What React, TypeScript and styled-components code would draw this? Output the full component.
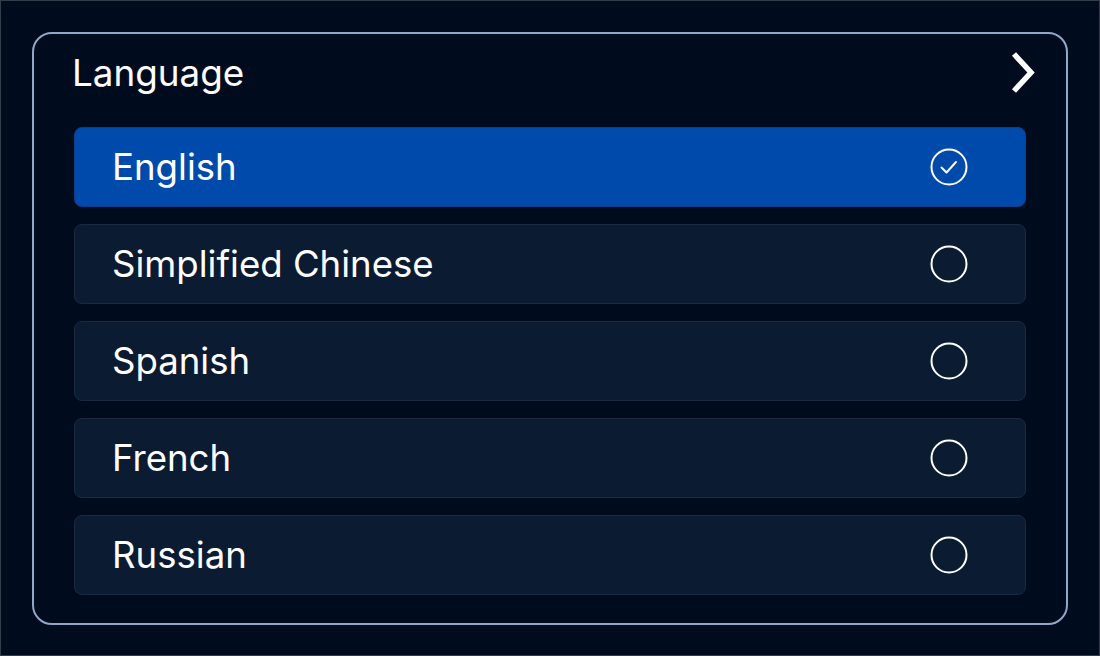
import React, { useState } from "react";
import styled, { createGlobalStyle } from "styled-components";

const GlobalStyle = createGlobalStyle`
    html, body {
        margin: 0;
        padding: 0;
        background: #000c1e;
    }
    * {
        box-sizing: border-box;
    }
`;

const Page = styled.div`
    width: 1100px;
    height: 656px;
    border: 1px solid #333c48;
    background: #000c1e;
    padding: 31px;
    font-family: Inter, "Noto Sans", sans-serif;
    color: #ffffff;
`;

const Card = styled.section`
    height: 593px;
    border: 2px solid #91a7c7;
    border-radius: 20px;
    padding: 0 40px;
    display: flex;
    flex-direction: column;
`;

const Header = styled.div`
    display: flex;
    align-items: center;
    justify-content: space-between;
    height: 77px;
    margin-right: -11px;
    margin-bottom: 16px;
`;

const Title = styled.h2`
    margin: 0 0 0 -2px;
    font-size: 36.8px;
    font-weight: 400;
`;

const ChevronButton = styled.button`
    background: none;
    border: none;
    padding: 0;
    width: 28px;
    height: 42px;
    display: flex;
    align-items: center;
    justify-content: center;
    cursor: pointer;
`;

const List = styled.div`
    display: flex;
    flex-direction: column;
    gap: 17px;
`;

const Row = styled.button<{ $selected: boolean }>`
    height: 80px;
    width: 100%;
    display: flex;
    align-items: center;
    justify-content: space-between;
    padding: 0 57px 0 37px;
    border-radius: 8px;
    border: 1px solid ${(p) => (p.$selected ? "#0a3f8f" : "#1b2a40")};
    background: ${(p) => (p.$selected ? "#004aab" : "#0b1b31")};
    color: #ffffff;
    font-family: inherit;
    font-size: 36.6px;
    font-weight: 400;
    text-align: left;
    cursor: pointer;
`;

const RadioIcon = ({ checked }: { checked: boolean }): JSX.Element => (
    <svg width="38" height="38" viewBox="0 0 38 38" fill="none">
        <circle cx="19" cy="19" r="17.5" stroke="#ffffff" strokeWidth="2" />
        {checked && <path d="M11.5 19.5 L16.5 24.5 L26 14" stroke="#ffffff" strokeWidth="2" strokeLinecap="round" strokeLinejoin="round" />}
    </svg>
);

const languages = ["English", "Simplified Chinese", "Spanish", "French", "Russian"];

const App = (): JSX.Element => {
    const [selected, setSelected] = useState("English");

    return (
        <>
            <GlobalStyle />
            <Page>
                <Card>
                    <Header>
                        <Title>Language</Title>
                        <ChevronButton aria-label="Open">
                            <svg width="28" height="42" viewBox="0 0 28 42" fill="none">
                                <path d="M5 2 L22 20.5 L5 39" stroke="#ffffff" strokeWidth="5.5" strokeLinejoin="miter" />
                            </svg>
                        </ChevronButton>
                    </Header>
                    <List>
                        {languages.map((language) => (
                            <Row key={language} $selected={language === selected} onClick={() => setSelected(language)}>
                                <span>{language}</span>
                                <RadioIcon checked={language === selected} />
                            </Row>
                        ))}
                    </List>
                </Card>
            </Page>
        </>
    );
};

export default App;
